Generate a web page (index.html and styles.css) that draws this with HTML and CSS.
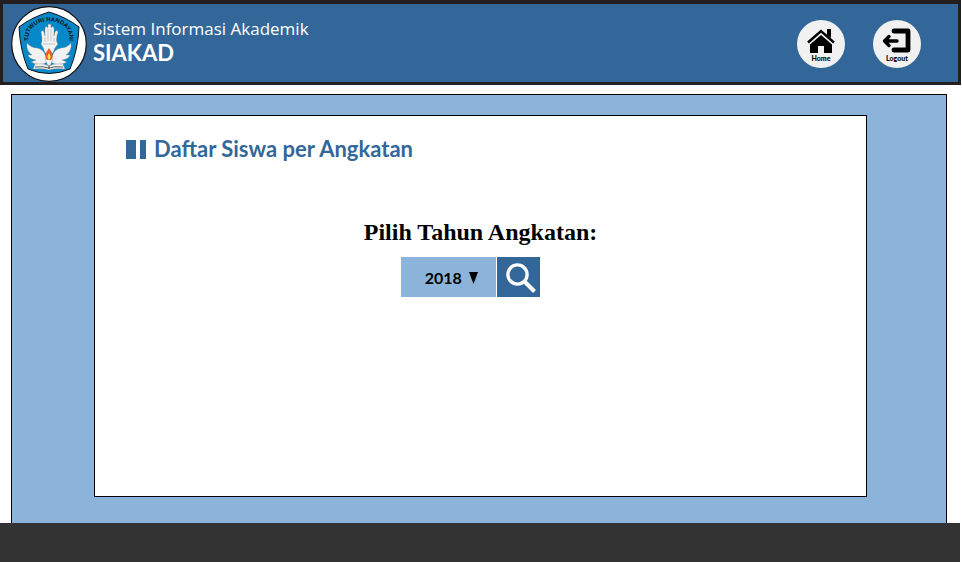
FILE: index.html
```html
<!DOCTYPE html>
<html lang="id">
<head>
<meta charset="utf-8">
<meta name="viewport" content="width=device-width, initial-scale=1">
<title>SIAKAD</title>
<link rel="stylesheet" href="styles.css">
</head>
<body>
<header class="topbar">
  <div class="brand">
    <svg class="logo" viewBox="0 0 76 76" aria-hidden="true">
      <circle cx="38" cy="38" r="37.3" fill="#fff" stroke="#111" stroke-width="1.2"/>
      <path d="M38 6Q55 11 68 21Q67 44 59 63Q38 72 17 63Q9 44 8 21Q21 11 38 6Z" fill="#0788c9" stroke="#111" stroke-width="1"/>
      <defs><path id="motto" d="M18 37C12 8 64 8 58 37"/></defs>
      <text class="motto"><textPath href="#motto" startOffset="50%" text-anchor="middle">TUTWURI HANDAYANI</textPath></text>
      <g fill="#f2f2f2" stroke="#888" stroke-width=".4">
        <path d="M34 47Q33 42 30 38Q32 35 30 26Q31 23 33 26L34 30V22Q35 19 37 22V19Q38 17 40 19V22Q42 19 43 22V30L44 26Q46 23 47 26Q44 35 47 38Q43 42 42 47Z"/>
        <path d="M36 56Q29 61 20 56L25 54Q18 53 17 49L21 49Q15 45 16 37Q20 42 26 42Q33 43 35 51Z"/>
        <path d="M40 56Q47 61 56 56L51 54Q58 53 59 49L55 49Q61 45 60 37Q56 42 50 42Q43 43 41 51Z"/>
        <path d="M24 58Q33 57 38 60Q43 57 52 58L54 63Q43 62 38 64Q33 62 22 63Z"/>
        <path d="M34 53H42L39 60H37Z"/>
      </g>
      <path d="M24 61Q33 60 38 62Q43 60 52 61M38 59V63" fill="none" stroke="#333" stroke-width=".8"/>
      <path d="M34 31V36M37 23V35M40 23V35M43 31V36M32 38H44" fill="none" stroke="#aaa" stroke-width=".6"/>
      <path d="M38 42Q44 50 40 54H36Q32 50 38 42Z" fill="#f15a24"/>
      <path d="M38 47Q41 51 38 54Q35 51 38 47Z" fill="#ffe34d"/>
    </svg>
    <div class="brand-text">
      <span class="brand-name">Sistem Informasi Akademik</span>
      <strong class="brand-short">SIAKAD</strong>
    </div>
  </div>
  <nav class="actions">
    <a class="action" href="#home">
      <svg class="action-icon" viewBox="0 0 30 25" aria-hidden="true">
        <path d="M2 14.500L15 3L28 14.500" fill="none" stroke="#000" stroke-width="2.400"/>
        <path d="M21 1H25V10L21 7Z"/>
        <path d="M15 7L26 16.500V25H18V18H12V25H4V16.500Z"/>
      </svg>
      <span>Home</span>
    </a>
    <a class="action" href="#logout">
      <svg class="action-icon" viewBox="0 0 30 25" aria-hidden="true">
        <path d="M12 3H26V22H12" fill="none" stroke="#000" stroke-width="4.800" stroke-linecap="round" stroke-linejoin="round"/>
        <path d="M15 13H3M7 8.500L2.500 13L7 17.500" fill="none" stroke="#000" stroke-width="3.400" stroke-linecap="round" stroke-linejoin="round"/>
      </svg>
      <span>Logout</span>
    </a>
  </nav>
</header>
<main class="panel">
  <section class="card">
    <h1 class="title"><span class="mark"></span>Daftar Siswa per Angkatan</h1>
    <form class="search">
      <label class="prompt" for="year">Pilih Tahun Angkatan:</label>
      <div class="controls">
        <div class="picker">
          <select class="year" id="year">
            <option>2018</option>
          </select>
          <svg class="arrow" viewBox="0 0 9 12" aria-hidden="true"><path d="M0 0H9L4.500 12Z"/></svg>
        </div>
        <button class="find" type="button" aria-label="Cari">
          <svg class="find-icon" viewBox="0 0 30 30" aria-hidden="true">
            <circle cx="11.500" cy="11.500" r="9.600" fill="none" stroke="#fff" stroke-width="3.300"/>
            <path d="M18 18L28.500 28.500" stroke="#fff" stroke-width="4"/>
          </svg>
        </button>
      </div>
    </form>
  </section>
</main>
<footer class="footer"></footer>
</body>
</html>
```

FILE: styles.css
```css
* {
  box-sizing: border-box;
}

body {
  display: flex;
  flex-direction: column;
  min-height: 100vh;
  margin: 0;
  background: #fff;
  color: #000;
  font-family: Lato, "Open Sans", sans-serif;
}

.topbar {
  display: flex;
  align-items: center;
  justify-content: space-between;
  margin-right: 1px;
  padding: 2px 37px 0 8px;
  border: 3px solid #231f20;
  border-top-width: 4px;
  background: #336799;
}

.brand {
  display: flex;
  align-items: center;
  gap: 6px;
}

.logo {
  width: 76px;
  height: 76px;
}

.motto {
  fill: #111;
  font-family: "Liberation Sans", sans-serif;
  font-size: 6px;
  font-weight: 700;
}

.brand-text {
  display: flex;
  flex-direction: column;
  padding-bottom: 6px;
  color: #fff;
  line-height: 24px;
}

.brand-name {
  font-family: "Open Sans", sans-serif;
  font-size: 17px;
}

.brand-short {
  font-size: 22px;
}

.actions {
  display: flex;
  gap: 28px;
}

.action {
  display: flex;
  flex-direction: column;
  align-items: center;
  gap: 1px;
  width: 48px;
  height: 48px;
  padding-top: 8px;
  border-radius: 50%;
  background: #f1f1f1;
  color: #000;
  font-size: 7px;
  font-weight: 900;
  line-height: 8px;
  text-decoration: none;
}

.action-icon {
  width: 30px;
  height: 25px;
}

.panel {
  display: flex;
  flex: 1;
  margin: 9px 15px 0 11px;
  padding: 20px 79px 26px 82px;
  border: 1px solid #000;
  border-bottom: 0;
  background: #8cb3d9;
}

.card {
  flex: 1;
  padding: 18px 31px;
  border: 1px solid #000;
  background: #fff;
}

.title {
  display: flex;
  align-items: center;
  gap: 8px;
  margin: 0 0 52px;
  color: #336799;
  font-size: 22px;
  line-height: 30px;
}

.mark {
  width: 20px;
  height: 19px;
  border: solid #336799;
  border-width: 0 6px 0 10px;
}

.search {
  width: fit-content;
  margin: 0 auto;
}

.prompt {
  display: block;
  font-family: "Liberation Serif", serif;
  font-size: 24px;
  font-weight: 700;
  line-height: 32px;
}

.controls {
  display: flex;
  gap: 1px;
  margin-top: 9px;
  padding-left: 37px;
}

.picker {
  position: relative;
}

.year {
  width: 95px;
  height: 40px;
  padding: 0 24px;
  border: 0;
  border-radius: 0;
  appearance: none;
  background: #8cb3d9;
  color: #000;
  font: 700 16px Lato, sans-serif;
}

.arrow {
  position: absolute;
  top: 15px;
  right: 18px;
  width: 9px;
  height: 12px;
  pointer-events: none;
}

.find {
  display: flex;
  align-items: center;
  justify-content: center;
  width: 43px;
  height: 40px;
  padding: 2px 0 0 6px;
  border: 0;
  background: #336799;
}

.find-icon {
  width: 30px;
  height: 30px;
}

.footer {
  height: 39px;
  margin-right: 2px;
  background: #333;
}
```
